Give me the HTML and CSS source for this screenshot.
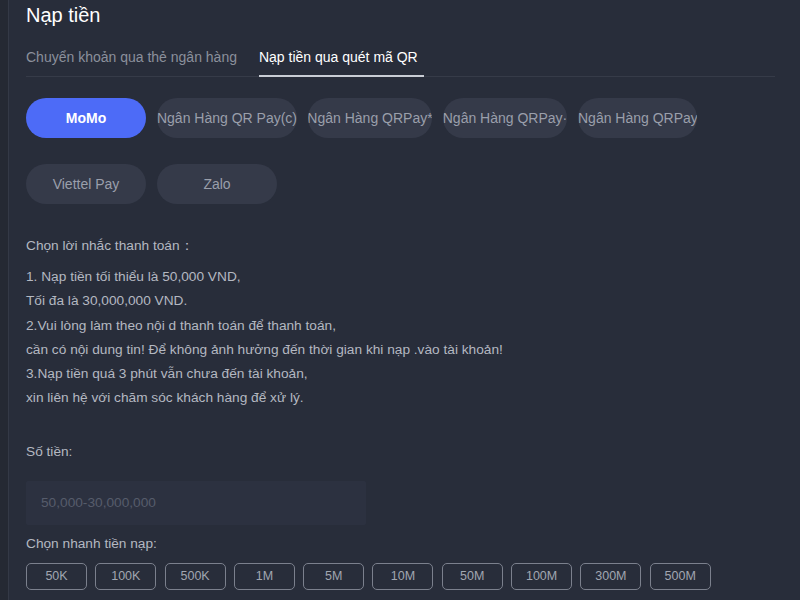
FILE: index.html
```html
<!DOCTYPE html>
<html lang="vi">
<head>
    <meta charset="UTF-8">
    <meta name="viewport" content="width=device-width, initial-scale=1.0">
    <title>Nạp tiền</title>
    <link rel="stylesheet" href="styles.css">
</head>
<body>

<div class="panel">
    <h1 class="title">Nạp tiền</h1>

    <!-- Tabs -->
    <div class="tabs">
        <div class="tab">Chuyển khoản qua thẻ ngân hàng</div>
        <div class="tab active">Nạp tiền qua quét mã QR</div>
    </div>

    <!-- Payment channels -->
    <div class="chips">
        <div class="chip selected">MoMo</div>
        <div class="chip chip-wide">Ngân Hàng QR Pay(c)</div>
        <div class="chip chip-mid">Ngân Hàng QRPay*</div>
        <div class="chip chip-mid">Ngân Hàng QRPay·</div>
        <div class="chip chip-left">Ngân Hàng QRPay</div>
    </div>
    <div class="chips">
        <div class="chip">Viettel Pay</div>
        <div class="chip">Zalo</div>
    </div>

    <!-- Notes -->
    <p class="note-title">Chọn lời nhắc thanh toán：</p>
    <div class="notes">
        1. Nạp tiền tối thiểu là 50,000 VND,<br>
        Tối đa là 30,000,000 VND.<br>
        2.Vui lòng làm theo nội d thanh toán để thanh toán,<br>
        cần có nội dung tin! Để không ảnh hưởng đến thời gian khi nạp .vào tài khoản!<br>
        3.Nạp tiền quá 3 phút vẫn chưa đến tài khoản,<br>
        xin liên hệ với chăm sóc khách hàng để xử lý.
    </div>

    <!-- Amount -->
    <label class="field-label" for="amount">Số tiền:</label>
    <input class="amount-input" type="text" id="amount" placeholder="50,000-30,000,000">

    <p class="quick-label">Chọn nhanh tiền nạp:</p>
    <div class="quick">
        <button>50K</button>
        <button>100K</button>
        <button>500K</button>
        <button>1M</button>
        <button>5M</button>
        <button>10M</button>
        <button>50M</button>
        <button>100M</button>
        <button>300M</button>
        <button>500M</button>
    </div>
</div>

</body>
</html>
```

FILE: styles.css
```css
body {
    margin: 0;
    background-color: #252933;
    font-family: "Liberation Sans", Arial, sans-serif;
    color: #b4b8c1;
}

.panel {
    margin-left: 8px;
    border-left: 1px solid #343946;
    background-color: #282d3a;
    min-height: 600px;
    padding: 0 25px 0 17px;
    box-sizing: border-box;
}

.title {
    margin: 0;
    padding-top: 3px;
    font-size: 20px;
    font-weight: normal;
    color: #ffffff;
    line-height: 24px;
}

/* Tabs */
.tabs {
    display: flex;
    gap: 22px;
    margin-top: 22px;
    border-bottom: 1px solid #363b48;
}

.tab {
    font-size: 14px;
    color: #8b909c;
    padding-bottom: 10px;
    line-height: 17px;
}

.tab.active {
    color: #ffffff;
    border-bottom: 2px solid #c9cdd5;
    margin-bottom: -1px;
    padding: 0 6px 9px 0;
}

/* Channel chips */
.chips {
    display: flex;
    gap: 11px;
    margin-top: 21px;
}

.chips + .chips {
    margin-top: 26px;
}

.chip {
    width: 120px;
    height: 40px;
    border-radius: 20px;
    background-color: #353a49;
    color: #9a9fab;
    font-size: 14px;
    display: flex;
    align-items: center;
    justify-content: center;
    white-space: nowrap;
    overflow: hidden;
}

.chip-wide {
    width: 140px;
}

.chip-mid {
    width: 124px;
}

.chip-left {
    width: 119px;
    justify-content: flex-start;
}

.chip.selected {
    background-color: #4d6bf7;
    color: #ffffff;
    font-weight: bold;
}

/* Notes */
.note-title {
    margin: 34px 0 0;
    font-size: 13.7px;
    line-height: 16px;
}

.notes {
    margin-top: 11px;
    font-size: 13.7px;
    line-height: 24.3px;
}

/* Amount */
.field-label {
    display: block;
    margin-top: 33px;
    font-size: 13.7px;
    line-height: 16px;
}

.amount-input {
    display: block;
    margin-top: 21px;
    width: 340px;
    height: 44px;
    border: none;
    border-radius: 2px;
    background-color: #2c3140;
    padding: 0 15px;
    box-sizing: border-box;
    font-family: inherit;
    font-size: 13.7px;
    color: #ffffff;
    outline: none;
}

.amount-input::placeholder {
    color: #565c6b;
}

.quick-label {
    margin: 11px 0 0;
    font-size: 13.7px;
    line-height: 16px;
}

.quick {
    display: flex;
    gap: 8.3px;
    margin-top: 11px;
}

.quick button {
    width: 61px;
    height: 27px;
    background: transparent;
    border: 1px solid #7b808d;
    border-radius: 5px;
    color: #a1a6b1;
    font-family: inherit;
    font-size: 12.5px;
    cursor: pointer;
    padding: 0;
}
```
